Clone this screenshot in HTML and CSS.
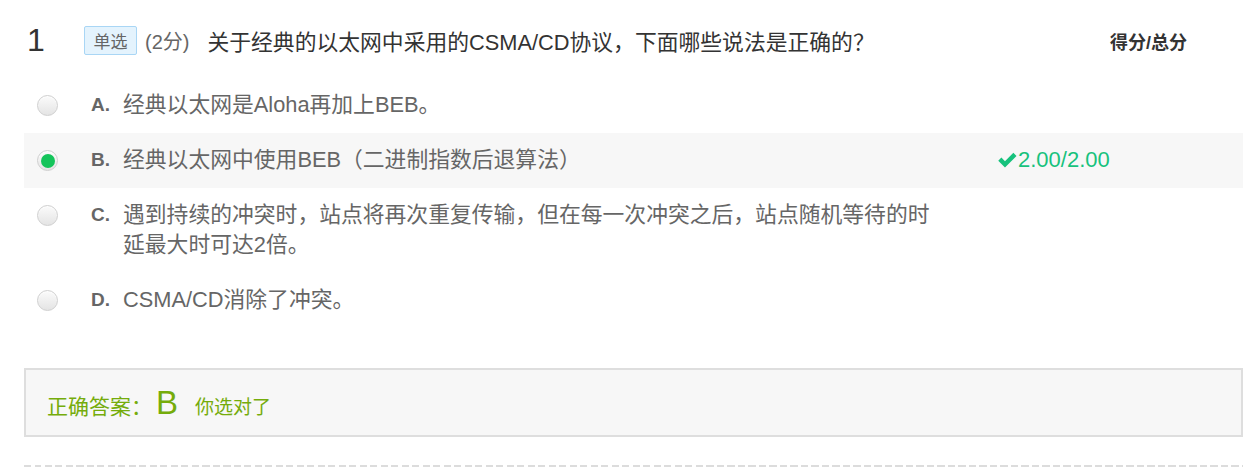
FILE: index.html
```html
<!DOCTYPE html>
<html lang="zh-CN">
<head>
<meta charset="utf-8">
<title>单选题</title>
<link rel="stylesheet" href="styles.css">
</head>
<body>
<div class="question">
  <div class="qhead">
    <div class="qnum">1</div>
    <div class="qbody">
      <span class="tag">单选</span>
      <span class="pts">(2分)</span>
      <span class="qtext">关于经典的以太网中采用的CSMA/CD协议，下面哪些说法是正确的？</span>
    </div>
    <div class="qscore">得分/总分</div>
  </div>

  <ul class="opts">
    <li class="opt">
      <span class="radio"></span>
      <span class="lbl">A.</span>
      <span class="otext">经典以太网是Aloha再加上BEB。</span>
    </li>
    <li class="opt opt-sel">
      <span class="radio radio-on"></span>
      <span class="lbl">B.</span>
      <span class="otext">经典以太网中使用BEB（二进制指数后退算法）</span>
      <span class="score"><svg class="chk" viewBox="0 0 20 16" width="21" height="17"><path d="M1.2 8.2 L4.2 5.2 L7.6 8.6 L15.6 0.6 L18.6 3.6 L7.6 14.6 Z" fill="#17c27d"/></svg>2.00/2.00</span>
    </li>
    <li class="opt">
      <span class="radio"></span>
      <span class="lbl">C.</span>
      <span class="otext">遇到持续的冲突时，站点将再次重复传输，但在每一次冲突之后，站点随机等待的时延最大时可达2倍。</span>
    </li>
    <li class="opt">
      <span class="radio"></span>
      <span class="lbl">D.</span>
      <span class="otext">CSMA/CD消除了冲突。</span>
    </li>
  </ul>

  <div class="answer">
    <span class="ans-label">正确答案：</span>
    <span class="ans-key">B</span>
    <span class="ans-note">你选对了</span>
  </div>

  <div class="sep"></div>
</div>
</body>
</html>
```

FILE: styles.css
```css
* { box-sizing: border-box; }

html, body {
  margin: 0;
  padding: 0;
  background: #fff;
}

body {
  font-family: "Liberation Sans", "Noto Sans CJK SC", sans-serif;
  color: #333;
}

.question {
  margin-left: 24px;
  width: 1219px;
}

/* header */
.qhead {
  display: flex;
  align-items: center;
  height: 37px;
  margin-top: 22px;
  margin-bottom: 19px;
}

.qnum {
  width: 60px;
  padding-left: 3px;
  font-size: 32px;
  color: #333;
  line-height: 37px;
}

.qbody {
  display: flex;
  align-items: center;
  width: 1026px;
}

.tag {
  display: inline-flex;
  align-items: center;
  justify-content: center;
  width: 53px;
  height: 29px;
  border: 1px solid #a9d6f5;
  border-radius: 2px;
  background: #e4f3fd;
  color: #666;
  font-size: 17px;
}

.pts {
  margin-left: 8px;
  font-size: 20px;
  color: #666;
}

.qtext {
  margin-left: 18px;
  font-size: 21.8px;
  color: #333;
}

.qscore {
  font-size: 18px;
  font-weight: bold;
  color: #333;
}

/* options */
.opts {
  list-style: none;
  margin: 0;
  padding: 0;
}

.opt {
  display: flex;
  align-items: flex-start;
  padding: 12px 0 13px;
  font-size: 21.8px;
  line-height: 30px;
  color: #666;
}

.opt-sel {
  background: #f7f7f7;
}

.radio {
  flex: none;
  width: 21px;
  height: 21px;
  margin: 5px 0 0 13px;
  border-radius: 50%;
  border: 1px solid #cfcfcf;
  background: linear-gradient(#fbfbfb, #e4e4e4);
  box-shadow: inset 0 1px 1px rgba(255, 255, 255, 0.8);
  display: flex;
  align-items: center;
  justify-content: center;
}

.radio-on::after {
  content: "";
  width: 14px;
  height: 14px;
  border-radius: 50%;
  background: #14c45a;
}

.lbl {
  flex: none;
  width: 32px;
  margin-left: 33px;
  font-size: 19px;
  font-weight: bold;
  color: #666;
}

.otext {
  width: 820px;
}

.score {
  display: flex;
  align-items: center;
  margin-left: 54px;
  color: #17c27d;
  font-size: 22px;
}

.chk {
  margin-right: 0;
}

/* answer */
.answer {
  display: flex;
  align-items: baseline;
  height: 69px;
  margin-top: 40px;
  padding-left: 21px;
  padding-top: 14px;
  border: 2px solid #dedede;
  background: #f7f7f7;
  color: #75ac0b;
}

.ans-label {
  font-size: 21px;
}

.ans-key {
  font-size: 33px;
  margin-left: 4px;
}

.ans-note {
  font-size: 19px;
  margin-left: 17px;
}

.sep {
  height: 2px;
  margin-top: 28px;
  background: repeating-linear-gradient(to right, #dcdcdc 0 7px, transparent 7px 10.5px);
}
```
